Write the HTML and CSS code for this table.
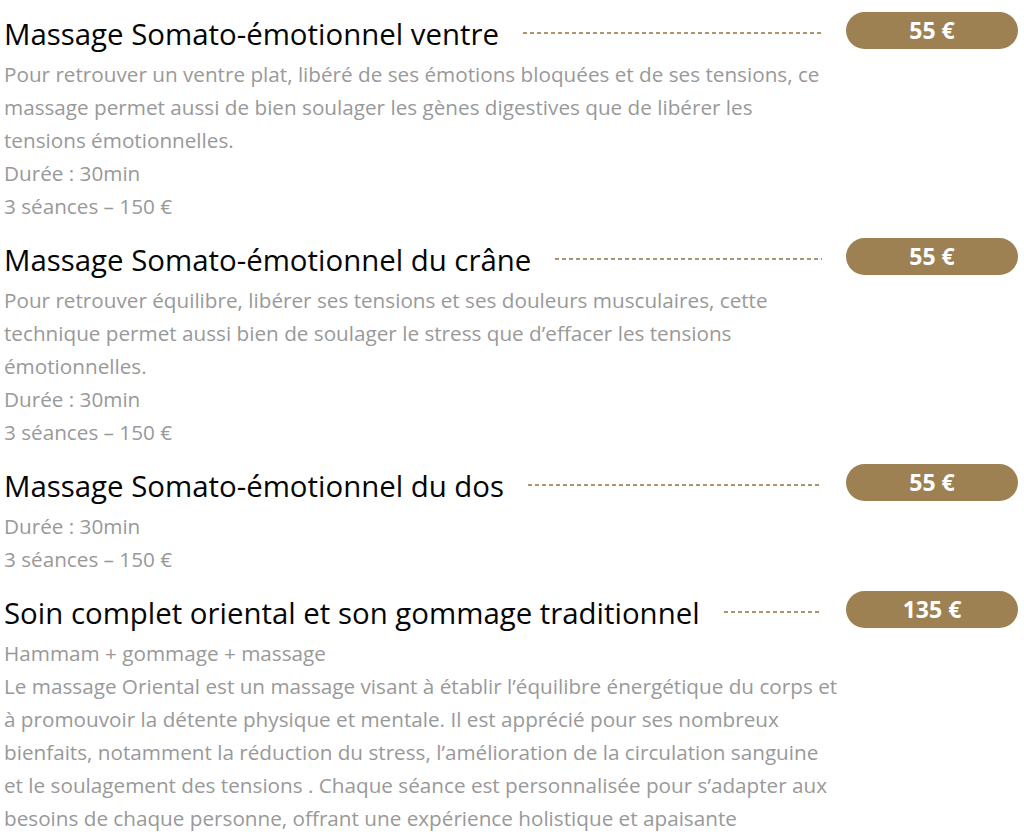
FILE: index.html
```html
<!DOCTYPE html>
<html lang="fr">
<head>
<meta charset="utf-8">
<title>Soins</title>
<link rel="stylesheet" href="styles.css">
</head>
<body>
<div class="menu">
  <div class="item">
    <div class="head">
      <h3 class="title">Massage Somato-émotionnel ventre</h3>
      <span class="dots"></span>
      <span class="price">55 €</span>
    </div>
    <div class="desc">
      <p>Pour retrouver un ventre plat, libéré de ses émotions bloquées et de ses tensions, ce<br>massage permet aussi de bien soulager les gènes digestives que de libérer les<br>tensions émotionnelles.</p>
      <p>Durée : 30min</p>
      <p>3 séances – 150 €</p>
    </div>
  </div>
  <div class="item">
    <div class="head">
      <h3 class="title">Massage Somato-émotionnel du crâne</h3>
      <span class="dots"></span>
      <span class="price">55 €</span>
    </div>
    <div class="desc">
      <p>Pour retrouver équilibre, libérer ses tensions et ses douleurs musculaires, cette<br>technique permet aussi bien de soulager le stress que d’effacer les tensions<br>émotionnelles.</p>
      <p>Durée : 30min</p>
      <p>3 séances – 150 €</p>
    </div>
  </div>
  <div class="item">
    <div class="head">
      <h3 class="title">Massage Somato-émotionnel du dos</h3>
      <span class="dots"></span>
      <span class="price">55 €</span>
    </div>
    <div class="desc">
      <p>Durée : 30min</p>
      <p>3 séances – 150 €</p>
    </div>
  </div>
  <div class="item">
    <div class="head">
      <h3 class="title">Soin complet oriental et son gommage traditionnel</h3>
      <span class="dots"></span>
      <span class="price">135 €</span>
    </div>
    <div class="desc">
      <p>Hammam + gommage + massage</p>
      <p>Le massage Oriental est un massage visant à établir l’équilibre énergétique du corps et<br>à promouvoir la détente physique et mentale. Il est apprécié pour ses nombreux<br>bienfaits, notamment la réduction du stress, l’amélioration de la circulation sanguine<br>et le soulagement des tensions . Chaque séance est personnalisée pour s’adapter aux<br>besoins de chaque personne, offrant une expérience holistique et apaisante</p>
    </div>
  </div>
</div>
</body>
</html>
```
FILE: styles.css
```css
html, body {
  margin: 0;
  padding: 0;
  background: #ffffff;
}
body {
  font-family: "Open Sans", "Noto Sans", sans-serif;
  overflow: hidden;
}
.menu {
  padding: 12px 6px 0 4px;
  display: flex;
  flex-direction: column;
  gap: 15px;
}
.item {
  display: flex;
  flex-direction: column;
}
.head {
  display: flex;
  align-items: center;
  height: 37px;
}
.title {
  margin: 0;
  font-size: 29.4px;
  font-weight: 400;
  color: #050505;
  line-height: 37px;
  padding-top: 8px;
  white-space: nowrap;
}
.dots {
  flex: 1;
  height: 2px;
  margin: 5px 24px 0 24px;
  background: repeating-linear-gradient(to right, #ad9370 0 4px, transparent 4px 7px);
}
.price {
  width: 172px;
  height: 37px;
  border-radius: 19px;
  background: #9e8152;
  color: #fff;
  font-weight: 700;
  font-size: 23px;
  line-height: 37px;
  text-align: center;
  flex: none;
}
.desc {
  margin-top: 9px;
  max-width: 880px;
  color: #999999;
  font-size: 20.7px;
  line-height: 33px;
  white-space: nowrap;
}
.desc p {
  margin: 0;
}
```
